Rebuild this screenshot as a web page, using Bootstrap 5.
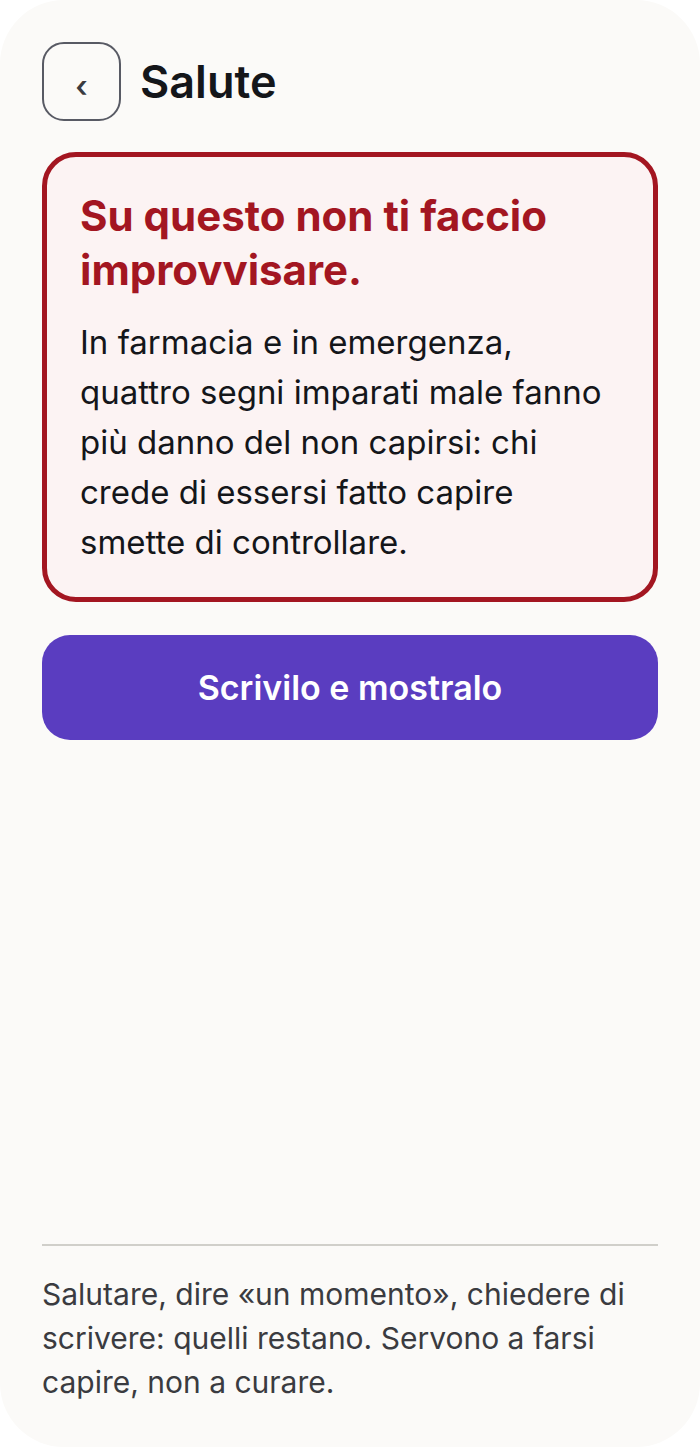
<!DOCTYPE html>
<html lang="it">
<head>
<meta charset="utf-8">
<meta name="viewport" content="width=device-width, initial-scale=1">
<title>Salute</title>
<link href="https://cdn.jsdelivr.net/npm/bootstrap@5.3.0/dist/css/bootstrap.min.css" rel="stylesheet">
<style>
body{background:#fff;font-family:Inter,"Liberation Sans",sans-serif;color:#14161a}
.screen{background:#fbfaf8;border-radius:64px;padding:42px 42px 42px}
.topbar{gap:19px}
.back{width:79px;height:79px;border:2px solid #585a64;border-radius:22px;background:transparent;color:#3a3b40;font-size:30px;line-height:40px;font-weight:600;padding:8px 0 0}
.title{font-size:45px;line-height:56px;font-weight:600}
.alert-box{margin-top:31px;padding:32px 33px 30px;border:5px solid #a31621;border-radius:34px;background:#fcf3f3}
.alert-title{color:#a31621;font-size:42px;line-height:54px;font-weight:700;margin-bottom:20px}
.alert-text{font-size:33px;line-height:50px}
.action{margin-top:33px;height:105px;border-radius:28px;background:#5a3dc0;color:#fff;font-size:34px;font-weight:600}
.action:hover{background:#4e33ad;color:#fff}
.note{border-top:2px solid #d0cfca;padding-top:26px;padding-bottom:1px;font-size:30px;line-height:44px;color:#3a3b40}
</style>
</head>
<body>
<main class="screen d-flex flex-column min-vh-100">
<header class="topbar d-flex align-items-center">
<button type="button" class="back" aria-label="Indietro">‹</button>
<h1 class="title mb-0">Salute</h1>
</header>
<section class="alert-box">
<h2 class="alert-title">Su questo non ti faccio improvvisare.</h2>
<p class="alert-text mb-0">In farmacia e in emergenza, quattro segni imparati male fanno più danno del non capirsi: chi crede di essersi fatto capire smette di controllare.</p>
</section>
<button type="button" class="action btn w-100 border-0">Scrivilo e mostralo</button>
<footer class="note mt-auto">Salutare, dire «un momento», chiedere di scrivere: quelli restano. Servono a farsi capire, non a curare.</footer>
</main>
<script src="https://cdn.jsdelivr.net/npm/bootstrap@5.3.0/dist/js/bootstrap.bundle.min.js"></script>
</body>
</html>
